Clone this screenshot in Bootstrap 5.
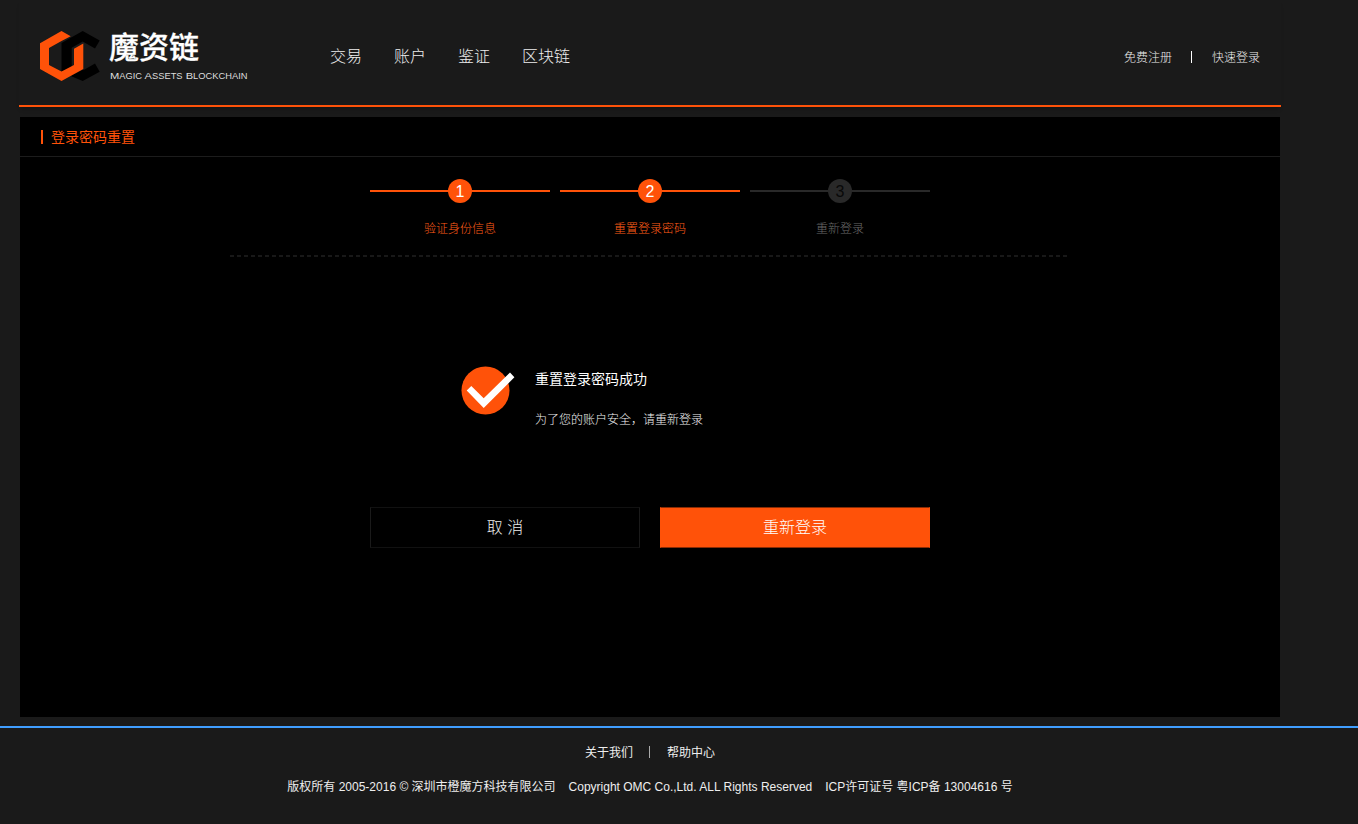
<!DOCTYPE html>
<html lang="zh-CN">
<head>
<meta charset="utf-8">
<meta name="viewport" content="width=device-width, initial-scale=1">
<title>登录密码重置</title>
<link rel="stylesheet" href="https://cdn.jsdelivr.net/npm/bootstrap@5.3.0/dist/css/bootstrap.min.css">
<style>
:root{--brand:#ff5209;--page:#1a1a1a}
body{background:var(--page);color:#eee;font-family:"Liberation Sans","Noto Sans CJK SC",sans-serif;font-size:12px;line-height:18px;overflow:hidden}
a{color:inherit;text-decoration:none}
.site-header{width:1262px;height:107px;margin-left:19px;padding:0 21px 0 20px;border-bottom:2px solid var(--brand);box-shadow:0 4px 4px -2px rgba(0,0,0,.25)}
.brand-logo{display:block;margin-top:15px}
.main-links{gap:32px;margin:45px 0 0 78px;font-size:16px;line-height:24px;font-weight:300}
.main-links .nav-link{padding:0;color:#eee}
.main-links .nav-link:hover{color:var(--brand)}
.user-links{margin-top:49px;color:#eee;font-weight:300}
.user-sep{width:1px;height:12px;margin:2px 20px 0 19px;background:#fff}
.panel{width:1260px;height:600px;margin:10px 0 0 20px;background:#000}
.panel-title{height:40px;padding-left:21px;border-bottom:1px solid #1c1c1c;color:var(--brand);font-size:14px;line-height:20px}
.title-mark{width:2px;height:14px;margin-right:8px;background:var(--brand)}
.steps{width:560px;gap:10px;padding-top:22px}
.step{width:180px;color:var(--brand)}
.step-line{height:24px;background:linear-gradient(currentColor,currentColor) center/100% 2px no-repeat}
.step-num{width:24px;height:24px;background:var(--brand);color:#fff;font-size:16px;line-height:25px}
.step-label{margin-top:17px;font-weight:300;color:#ff5d18}
.step.pending{color:#292929}
.pending .step-num{background:#292929;color:#080808}
.pending .step-label{color:#6a6a6a}
.dashes{width:837px;height:2px;margin:17px 0 0 210px;background:repeating-linear-gradient(90deg,#181818 0 4px,transparent 4px 7px)}
.result{margin:108px 0 0 440px}
.result-text{margin-left:20px;padding-top:4px}
.result-title{font-size:14px;line-height:20px;color:#fff}
.result-note{margin-top:22px;line-height:18px;color:#f0f0f0;font-weight:300}
.actions{width:560px;gap:20px;margin-top:78px}
.act{--bs-btn-border-radius:0;--bs-btn-padding-y:0;--bs-btn-font-size:16px;--bs-btn-font-weight:300;--bs-btn-color:#eee;--bs-btn-hover-color:#fff;width:270px;height:41px;line-height:40px;border-color:#111 #1a1a1a}
.act-main{--bs-btn-bg:var(--brand);--bs-btn-color:#fff;--bs-btn-hover-bg:#ff6727;border-color:#8a2c05 var(--brand)}
.site-footer{margin-top:9px;border-top:2px solid #409eff;height:98px}
.footer-in{width:1300px;padding-top:16px}
.foot-sep{width:1px;height:12px;margin:2px 17px 0 16px;background:#aaa}
.legal{gap:13px;margin-top:16px}
</style>
</head>
<body>
<header class="site-header d-flex align-items-start">
  <a href="#" aria-label="魔资链">
    <svg class="brand-logo" width="213" height="75" viewBox="39 15 213 75">
      <path fill="#000" d="M61.5 43 82.7 31l17 9.5-4.7 8-12.3-7-11 6.2V67L61.5 72zM70.7 76l12.6-6.5v.8L95 63.4l4.7 8.3L82.7 81z"/>
      <path fill="#ff5209" d="M61.5 31 40 43.2V69l21.5 12 21.8-12V43.5L74 48.7V65l-12.5 6.5L49 65V48.1L61.5 41l9.2-4.8z"/>
      <text x="109" y="58" fill="#fff" stroke="#fff" stroke-width=".3" font-family="Noto Sans CJK SC,sans-serif" font-size="30" font-weight="500">魔资链</text>
      <text x="110" y="79.3" fill="#ddd" font-family="Liberation Sans,sans-serif" font-size="9.8" textLength="137.5" lengthAdjust="spacingAndGlyphs">M<tspan font-size="8.2">AGIC</tspan> A<tspan font-size="8.2">SSETS</tspan> B<tspan font-size="8.2">LOCKCHAIN</tspan></text>
    </svg>
  </a>
  <nav class="nav main-links">
    <a class="nav-link" href="#">交易</a><a class="nav-link" href="#">账户</a><a class="nav-link" href="#">鉴证</a><a class="nav-link" href="#">区块链</a>
  </nav>
  <div class="user-links d-flex ms-auto"><a href="#">免费注册</a><span class="user-sep"></span><a href="#">快速登录</a></div>
</header>
<main class="panel">
  <h1 class="panel-title d-flex align-items-center m-0 fw-normal"><span class="title-mark"></span>登录密码重置</h1>
  <div class="steps d-flex mx-auto">
    <div class="step"><div class="step-line"><div class="step-num rounded-circle text-center mx-auto">1</div></div><div class="step-label text-center">验证身份信息</div></div>
    <div class="step"><div class="step-line"><div class="step-num rounded-circle text-center mx-auto">2</div></div><div class="step-label text-center">重置登录密码</div></div>
    <div class="step pending"><div class="step-line"><div class="step-num rounded-circle text-center mx-auto">3</div></div><div class="step-label text-center">重新登录</div></div>
  </div>
  <div class="dashes"></div>
  <section class="result d-flex align-items-start">
    <svg width="55" height="50" viewBox="460 365 55 50"><circle cx="485.5" cy="390.5" r="24" fill="#ff5209"/><path fill="#fff" d="m466.7 390.5 4.6-4.6 12.4 12.4L510 372.6l4.4 4.6-30.7 30.9z"/></svg>
    <div class="result-text"><div class="result-title">重置登录密码成功</div><div class="result-note">为了您的账户安全，请重新登录</div></div>
  </section>
  <div class="actions d-flex mx-auto">
    <button type="button" class="btn act">取 消</button>
    <button type="button" class="btn act act-main">重新登录</button>
  </div>
</main>
<footer class="site-footer">
  <div class="footer-in">
    <div class="d-flex justify-content-center"><a href="#">关于我们</a><span class="foot-sep"></span><a href="#">帮助中心</a></div>
    <div class="legal d-flex justify-content-center"><span>版权所有 2005-2016 © 深圳市橙魔方科技有限公司</span><span>Copyright OMC Co.,Ltd. ALL Rights Reserved</span><span>ICP许可证号 粤ICP备 13004616 号</span></div>
  </div>
</footer>
<script src="https://cdn.jsdelivr.net/npm/bootstrap@5.3.0/dist/js/bootstrap.bundle.min.js"></script>
</body>
</html>
